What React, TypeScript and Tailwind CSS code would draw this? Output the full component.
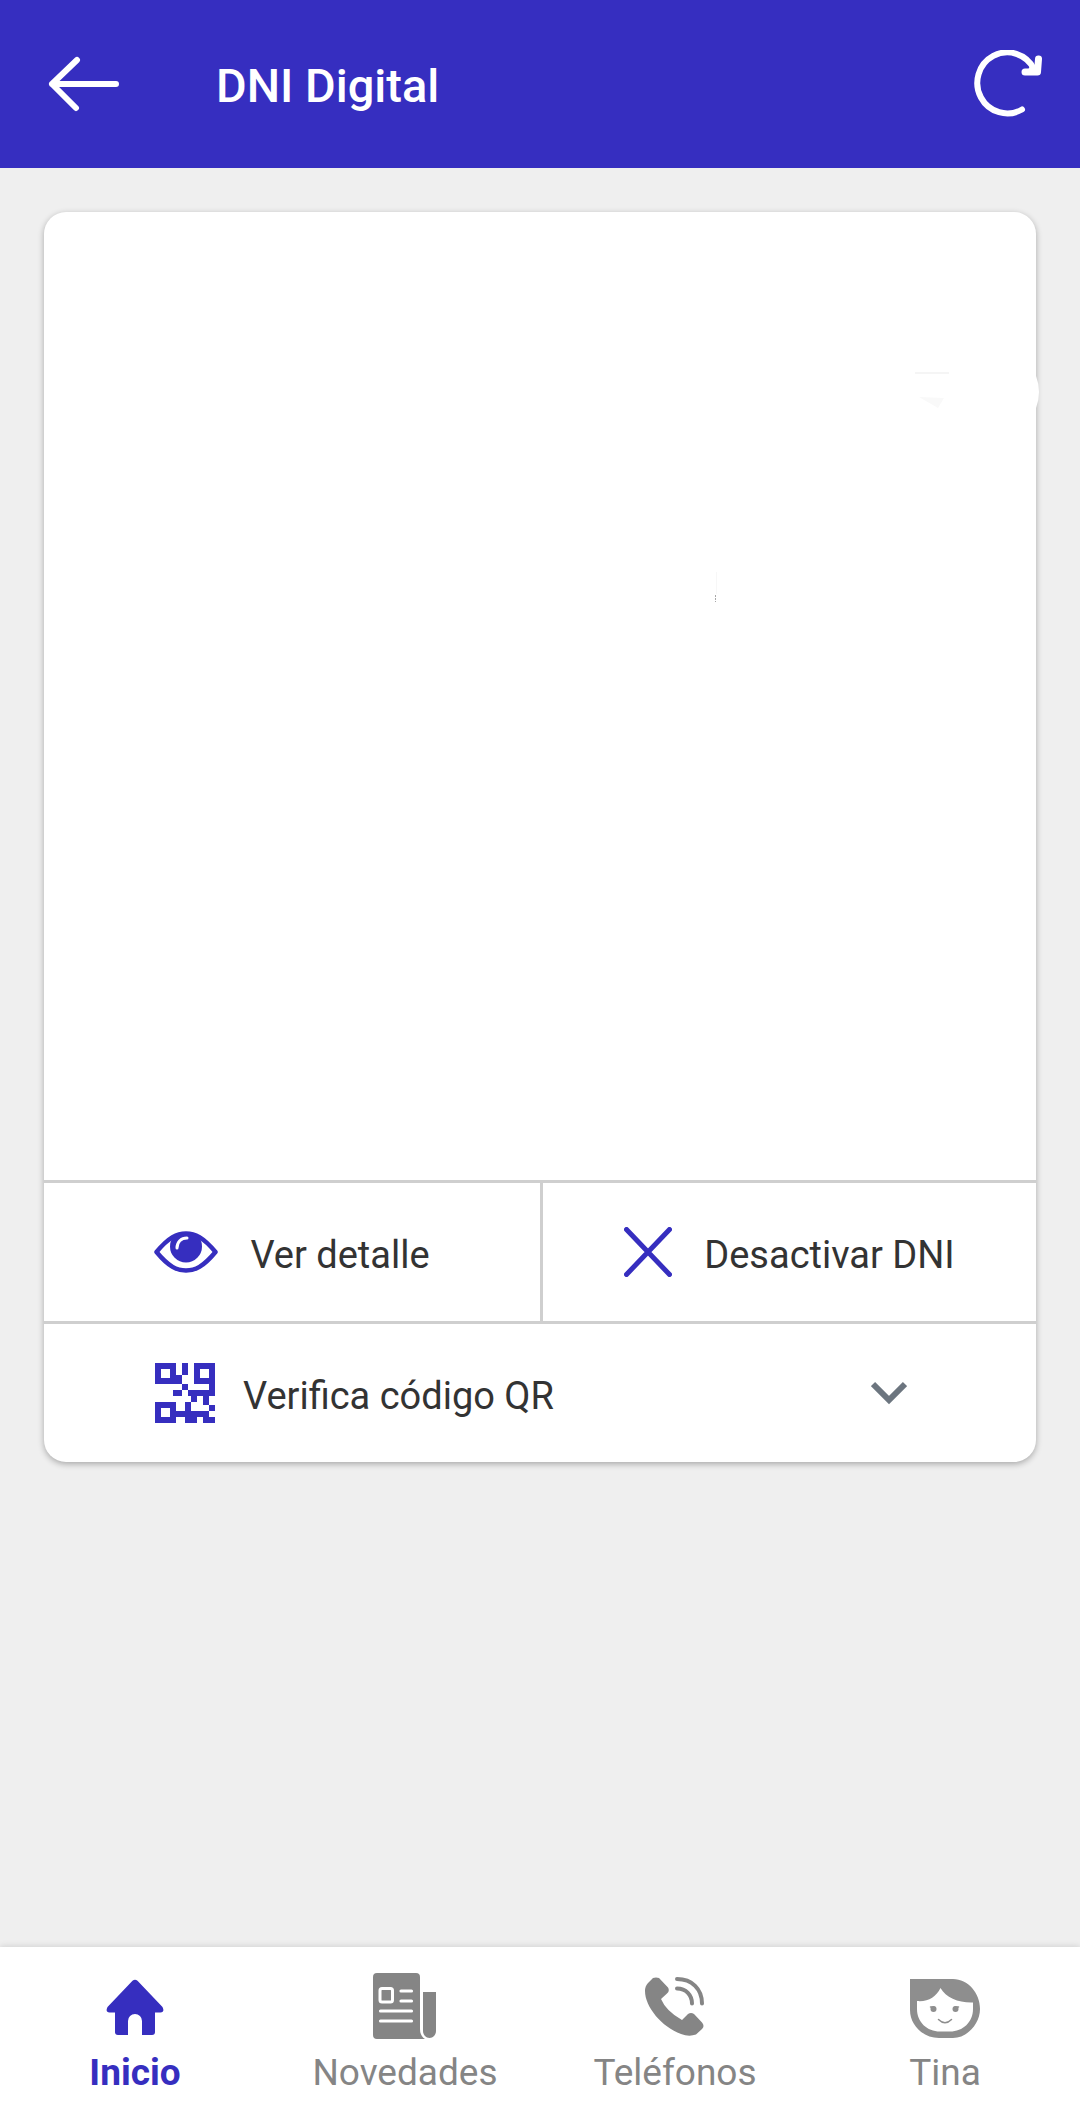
import React from "react";

const navItem = "flex flex-col items-center gap-3 no-underline";
const rowLabel = "pt-1.5";

function BackIcon() {
  return (
    <svg width="72" height="56" viewBox="0 0 72 56" fill="none" stroke="currentColor" strokeWidth="6" strokeLinecap="round" strokeLinejoin="round" aria-hidden="true">
      <path d="M4 28H68M29 4L4 28L28 52" />
    </svg>
  );
}

function RefreshIcon() {
  return (
    <svg width="68" height="68" viewBox="0 0 68 68" fill="none" stroke="currentColor" strokeLinecap="round" strokeLinejoin="round" aria-hidden="true">
      <path strokeWidth="6" d="M48 59.500A30 30.500 0 1 1 60 19" />
      <path strokeWidth="7" d="M64.500 9L63.500 22H51" />
      <path fill="currentColor" stroke="none" d="M58 12L65 24H52Z" />
    </svg>
  );
}

function EyeIcon() {
  return (
    <svg width="64" height="42" viewBox="0 0 64 42" fill="none" aria-hidden="true">
      <path d="M2.500 21C15 6 23 2.500 32 2.500S49 6 61.500 21C49 36 41 39.500 32 39.500S15 36 2.500 21Z" stroke="#362ebf" strokeWidth="4.500" strokeLinejoin="round" />
      <path d="M20 5C17 8 16 12 16 15.500A16 16 0 0 0 48 15.500C48 12 47 8 44 5C37 1 27 1 20 5Z" fill="#362ebf" />
      <path d="M23 17C23 11 27 7 33 7" stroke="white" strokeWidth="3" strokeLinecap="round" />
    </svg>
  );
}

function CloseIcon() {
  return (
    <svg width="48" height="50" viewBox="0 0 48 50" fill="none" stroke="#362ebf" strokeWidth="5" strokeLinecap="round" aria-hidden="true">
      <path d="M2.500 2.500L45.500 47.500M45.500 2.500L2.500 47.500" />
    </svg>
  );
}

function QrIcon() {
  return (
    <svg width="60" height="60" viewBox="0 0 60 60" fill="#362ebf" fillRule="evenodd" shapeRendering="crispEdges" aria-hidden="true">
      <path d="M0 0H21V12H27V21H0ZM6 6V15H15V6Z" />
      <path d="M27 0H33V12H27Z" />
      <path d="M39 0H60V33H54V42H48V33H42V39H36V33H33V27H54V21H39ZM45 6V15H54V6Z" />
      <path d="M27 21H33V27H27ZM18 27H27V33H18Z" />
      <path d="M0 39H21V48H30V39H36V48H54V54H60V60H48V54H42V60H30V54H21V60H0ZM6 45V54H15V45Z" />
      <path d="M54 42H60V48H54Z" />
    </svg>
  );
}

function ChevronIcon() {
  return (
    <svg width="36" height="24" viewBox="0 0 36 24" fill="none" stroke="#6c757f" strokeWidth="6" aria-hidden="true">
      <path d="M2 3L18 19L34 3" />
    </svg>
  );
}

function HomeIcon() {
  return (
    <svg width="58" height="66" viewBox="0 0 58 66" fill="currentColor" aria-hidden="true">
      <path d="M26.500 7.800Q29 5.500 31.500 7.800L56.500 34Q59 39 54.500 39.500H49V59Q49 62 46 62H36V48A7 7 0 0 0 22 48V62H12Q9 62 9 59V39.500H3.500Q-1 39 1.500 34Z" />
    </svg>
  );
}

function NewsIcon() {
  return (
    <svg width="64" height="66" viewBox="0 0 64 66" fill="none" aria-hidden="true">
      <path fill="currentColor" d="M4 0H43Q47 0 47 4V56Q47 63 52 66H4Q0 66 0 62V4Q0 0 4 0ZM50 19H63V58A6.500 7 0 0 1 50 58Z" />
      <rect x="7" y="15.500" width="12.500" height="13.500" rx="2" stroke="white" strokeWidth="3" />
      <path stroke="white" strokeWidth="3.200" strokeLinecap="round" d="M28 18H38.500M28 28H38.500M7.500 38H38.500M7.500 48H38.500" />
    </svg>
  );
}

function PhoneIcon() {
  return (
    <svg width="60" height="66" viewBox="0 0 60 66" fill="none" aria-hidden="true">
      <path fill="currentColor" d="M8 5Q11 4 14 5L23 14.500Q25 18 22 20.500L16 26Q21 38 37 47L43 41Q46 39 49 41L57 49.500Q60 53 57 56L51 61.500Q44 64 36 61C17 54 0 34 0 18Q0 13 3 10Z" />
      <path stroke="currentColor" strokeWidth="4" strokeLinecap="round" d="M32 15.500C41 15.500 47 22 47 30.500M32 6C47 6 57 16 57 30.500" />
    </svg>
  );
}

function TinaIcon() {
  return (
    <svg width="70" height="66" viewBox="0 0 70 66" fill="none" aria-hidden="true">
      <path fill="#8e8e8e" fillRule="evenodd" d="M0 6H43C58 6 70 20 70 36C70 51 57 65 43 65H29C13 65 0 52 0 37ZM30.500 15C26 24 18 29 7 28V36C7 49 17 58.500 30 58.500H40C53 58.500 63 49 63 36V29.500C49 30 36 25 30.500 15Z" />
      <circle cx="23.500" cy="36" r="3" fill="#8e8e8e" />
      <circle cx="45.500" cy="36" r="3" fill="#8e8e8e" />
      <path stroke="#8e8e8e" strokeWidth="1.500" strokeLinecap="round" d="M20.500 34H24M48.500 34H45M28.500 46.500Q35 53 41.500 46.500" />
    </svg>
  );
}

export default function App() {
  return (
    <div className="flex min-h-screen flex-col bg-[#efefef] font-['Roboto',sans-serif]">
      <header className="flex h-[168px] items-center bg-[#362ec0] pl-12 pr-[38px] text-white">
        <button type="button" aria-label="Volver"><BackIcon /></button>
        <h1 className="ml-24 flex-1 pt-1 text-[47px] font-medium">DNI Digital</h1>
        <button type="button" aria-label="Actualizar"><RefreshIcon /></button>
      </header>

      <main className="flex-1 px-11 pt-11">
        <section className="relative flex flex-col rounded-[22px] bg-white text-[38px] text-[#333333] shadow-[0_2px_6px_rgba(0,0,0,0.3)]">
          <div className="h-[968px]">
            <svg className="absolute right-[-3px] top-40 h-10 w-32" viewBox="0 0 128 40" aria-hidden="true">
              <path d="M4 1H38" stroke="#ebebeb" />
              <path d="M8 25L33 26L27 36Z" fill="#f9f9f9" />
              <path d="M125 4Q131 20 125 36Z" fill="white" />
            </svg>
            <svg className="absolute left-[669px] top-[360px] h-8 w-2" viewBox="0 0 8 32" aria-hidden="true">
              <path d="M3.500 0V22" stroke="#f7f7f7" />
              <path d="M2.500 23V30" stroke="#a8a8a8" strokeDasharray="2 1" />
            </svg>
          </div>
          <div className="grid grid-cols-2 border-y-3 border-[#cfcfcf]">
            <button type="button" className="flex h-[138px] items-center justify-center gap-8">
              <EyeIcon />
              <span className={rowLabel}>Ver detalle</span>
            </button>
            <button type="button" className="flex h-[138px] items-center justify-center gap-8 border-l-3 border-[#cfcfcf]">
              <CloseIcon />
              <span className={rowLabel}>Desactivar DNI</span>
            </button>
          </div>
          <button type="button" aria-expanded="false" className="flex h-[138px] items-center pl-[111px] pr-[129px] text-left">
            <QrIcon />
            <span className={`${rowLabel} ml-7 flex-1`}>Verifica código QR</span>
            <ChevronIcon />
          </button>
        </section>
      </main>

      <nav className="grid h-[167px] grid-cols-4 bg-white pt-[26px] text-[37px] leading-[44px] text-[#858585] shadow-[0_-1px_6px_rgba(0,0,0,0.12)]">
        <a href="#inicio" aria-current="page" className={`${navItem} font-bold text-[#362ebf]`}><HomeIcon /><span>Inicio</span></a>
        <a href="#novedades" className={navItem}><NewsIcon /><span>Novedades</span></a>
        <a href="#telefonos" className={navItem}><PhoneIcon /><span>Teléfonos</span></a>
        <a href="#tina" className={navItem}><TinaIcon /><span>Tina</span></a>
      </nav>
    </div>
  );
}
